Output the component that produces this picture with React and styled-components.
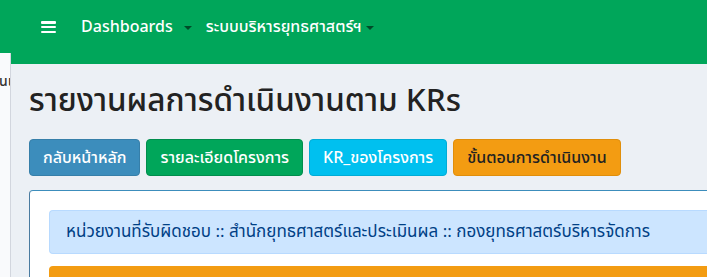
import React from "react";
import styled, { createGlobalStyle } from "styled-components";

const Global = createGlobalStyle`
  html, body { margin: 0; padding: 0; overflow: hidden; }
  body {
    background: #ecf0f5;
    font-family: "Noto Sans Thai", "Noto Sans", "Liberation Sans", sans-serif;
    width: 707px;
    height: 277px;
  }
`;

const Page = styled.div`
  width: 707px;
  height: 277px;
  overflow: hidden;
  display: flex;
  flex-direction: column;
`;

const Header = styled.header`
  flex: 0 0 64px;
  background: #00a65a;
  display: flex;
  align-items: flex-start;
  padding: 16px 0 0 41px;
  box-sizing: border-box;
`;

const Burger = styled.button`
  background: none;
  border: 0;
  padding: 0;
  margin: 5px 25px 0 0;
  width: 15px;
  height: 12px;
  display: flex;
  flex-direction: column;
  justify-content: space-between;
  span {
    display: block;
    height: 2.5px;
    background: #fff;
    border-radius: 1px;
  }
`;

const NavItem = styled.div`
  display: flex;
  align-items: center;
  color: #fff;
  font-size: 16px;
  font-weight: 500;
  line-height: 22px;
  margin-right: ${(p) => p.$gap || 0}px;
`;

const Caret = styled.span`
  display: inline-block;
  width: 0;
  height: 0;
  border-left: 4px solid transparent;
  border-right: 4px solid transparent;
  border-top: 4px solid rgba(0, 0, 0, 0.55);
  margin-left: ${(p) => p.$ml || 10}px;
  margin-top: 1px;
`;

const Body = styled.div`
  display: flex;
  flex: 1;
  min-height: 0;
`;

const Sidebar = styled.aside`
  flex: 0 0 10px;
  margin-top: -11px;
  background: #f9fafc;
  border-right: 1px solid #d2d6de;
  overflow: hidden;
  display: flex;
  flex-direction: column;
  align-items: flex-end;
  padding-top: 19px;
`;

const SideText = styled.div`
  font-size: 14px;
  font-weight: 500;
  color: #333;
  white-space: nowrap;
  line-height: 20px;
  margin-right: -2px;
`;

const Main = styled.main`
  flex: 0 0 auto;
  width: 760px;
  padding: 17px 0 0 18px;
  box-sizing: border-box;
`;

const Title = styled.h1`
  margin: 0 0 16px 0;
  font-size: 31.5px;
  font-weight: 500;
  color: #222;
  line-height: 42px;
`;

const Buttons = styled.div`
  display: flex;
  gap: 6px;
  margin-bottom: 14px;
`;

const Btn = styled.button`
  height: 37px;
  padding: 0 13px;
  border-radius: 4px;
  border: 1px solid ${(p) => p.$border};
  background: ${(p) => p.$bg};
  color: ${(p) => p.$color || "#fff"};
  font-family: inherit;
  font-size: 16px;
  font-weight: 500;
  line-height: 22px;
`;

const Box = styled.section`
  background: #fff;
  border: 1px solid #3c8dbc;
  border-left-color: #4a7ba0;
  border-radius: 4px 0 0 0;
  padding: 19px 0 0 19px;
  height: 200px;
`;

const Alert = styled.div`
  background: #cce5ff;
  border: 1px solid #b8daff;
  border-right: 0;
  border-radius: 4px 0 0 4px;
  color: #004085;
  font-size: 17px;
  line-height: 22px;
  padding: 10px 16px;
  margin-bottom: 12px;
  white-space: nowrap;
`;

const OrangeBar = styled.div`
  height: 40px;
  background: #f39c12;
  border-radius: 4px 0 0 0;
`;

export default function App() {
  return (
    <Page>
      <Global />
      <Header>
        <Burger aria-label="menu">
          <span />
          <span />
          <span />
        </Burger>
        <NavItem $gap={14}>
          Dashboards
          <Caret $ml={11} />
        </NavItem>
        <NavItem>
          ระบบบริหารยุทธศาสตร์ฯ
          <Caret $ml={4} />
        </NavItem>
      </Header>
      <Body>
        <Sidebar>
          <SideText>งานเ</SideText>
        </Sidebar>
        <Main>
          <Title>รายงานผลการดำเนินงานตาม KRs</Title>
          <Buttons>
            <Btn $bg="#3c8dbc" $border="#367fa9">กลับหน้าหลัก</Btn>
            <Btn $bg="#00a65a" $border="#008d4c">รายละเอียดโครงการ</Btn>
            <Btn $bg="#00c0ef" $border="#00acd6">KR_ของโครงการ</Btn>
            <Btn $bg="#f39c12" $border="#e08e0b" $color="#222">ขั้นตอนการดำเนินงาน</Btn>
          </Buttons>
          <Box>
            <Alert>
              หน่วยงานที่รับผิดชอบ :: สำนักยุทธศาสตร์และประเมินผล :: กองยุทธศาสตร์บริหารจัดการ
            </Alert>
            <OrangeBar />
          </Box>
        </Main>
      </Body>
    </Page>
  );
}
